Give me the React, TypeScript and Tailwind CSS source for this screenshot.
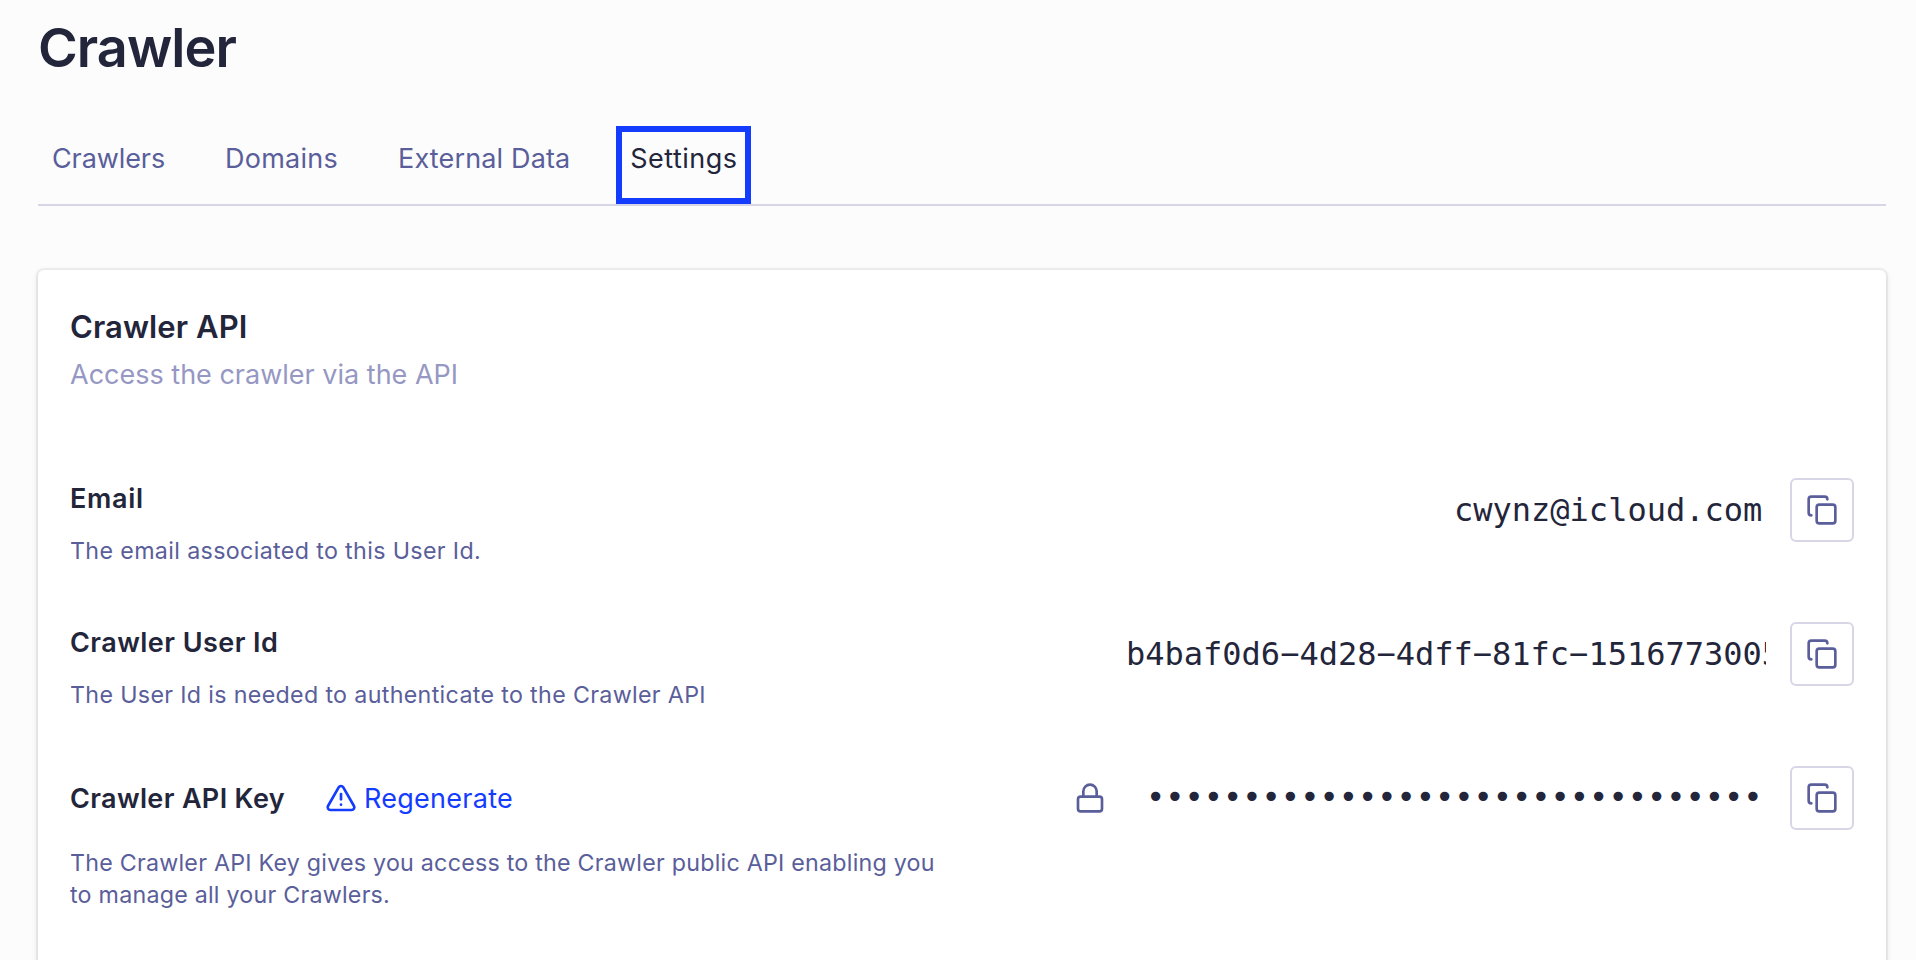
import { Copy, Lock, TriangleAlert } from "lucide-react";
import type { ReactNode } from "react";

const tabs = [
  { label: "Crawlers", style: "ml-[14px] tracking-[-0.1px]" },
  { label: "Domains", style: "ml-[60px] tracking-[0.25px]" },
  { label: "External Data", style: "ml-[60px] tracking-[0.15px]" },
];

function CopyButton() {
  return (
    <button
      type="button"
      aria-label="Copy"
      className="flex size-16 shrink-0 items-center justify-center rounded-[6px] border-2 border-[#d6d6e7] bg-white text-[#5a5e9a]"
    >
      <Copy size={32} strokeWidth={2} />
    </button>
  );
}

function Row({ children, value }: { children: ReactNode; value: ReactNode }) {
  return (
    <div className="flex h-[144px] items-start justify-between">
      <div>{children}</div>
      <div className="flex h-16 items-center gap-6">
        {value}
        <CopyButton />
      </div>
    </div>
  );
}

export default function App() {
  return (
    <div className="h-[960px] overflow-hidden bg-[#fcfcfd] pr-[30px] pl-[38px] font-[Inter,sans-serif] text-[#23263b]">
      <h1 className="pt-[16px] text-[54px] leading-[64px] font-semibold tracking-[-0.95px]">Crawler</h1>

      <nav className="mt-[46px] flex h-[80px] items-start border-b-2 border-[#d6d6e7] text-[27px] leading-[66px] text-[#5a5e9a]">
        {tabs.map((tab) => (
          <a key={tab.label} className={tab.style}>
            {tab.label}
          </a>
        ))}
        <a className="ml-[46px] flex h-[78px] w-[135px] justify-center border-6 border-[#143cff] leading-[54px] tracking-[0.5px] text-[#23263b]">
          Settings
        </a>
      </nav>

      <section className="mt-[64px] h-[760px] rounded-[6px] bg-white px-8 pt-[33px] shadow-[0_0_0_2px_rgba(35,38,59,0.05),0_2px_6px_rgba(35,38,59,0.15)]">
        <h2 className="text-[31px] leading-[48px] font-semibold tracking-[0.1px]">Crawler API</h2>
        <p className="pt-px text-[27px] leading-[46px] text-[#9698c3]">Access the crawler via the API</p>

        <div className="mt-20">
          <Row
            value={
              <span className="w-[312px] overflow-hidden font-['DejaVu_Sans_Mono',monospace] text-[32px] leading-[40px] whitespace-nowrap">
                cwynz@icloud.com
              </span>
            }
          >
            <h3 className="pt-px text-[27px] leading-[40px] font-semibold tracking-[0.7px]">Email</h3>
            <p className="mt-[16px] text-[23.25px] leading-[32px] tracking-[0.35px] text-[#5a5e9a]">
              The email associated to this User Id.
            </p>
          </Row>

          <Row
            value={
              <span className="w-[640px] overflow-hidden font-['DejaVu_Sans_Mono',monospace] text-[32px] leading-[40px] whitespace-nowrap">
                b4baf0d6−4d28−4dff−81fc−1516773005
              </span>
            }
          >
            <h3 className="pt-px text-[27px] leading-[40px] font-semibold tracking-[0.45px]">Crawler User Id</h3>
            <p className="mt-[16px] text-[23.25px] leading-[32px] tracking-[0.33px] text-[#5a5e9a]">
              The User Id is needed to authenticate to the Crawler API
            </p>
          </Row>

          <Row
            value={
              <>
                <Lock size={32} strokeWidth={2} className="mr-4 text-[#5a5e9a]" />
                <span className="w-[620px] overflow-hidden pb-[2px] font-['DejaVu_Sans_Mono',monospace] text-[32px] leading-[40px] whitespace-nowrap">
                  ••••••••••••••••••••••••••••••••
                </span>
              </>
            }
          >
            <div className="flex h-16 items-center">
              <h3 className="pt-px text-[27px] leading-[40px] font-semibold tracking-[0.35px]">Crawler API Key</h3>
              <a className="ml-[40px] flex items-center gap-[7px] text-[27px] leading-[40px] tracking-[0.28px] text-[#143cff]">
                <TriangleAlert size={32} strokeWidth={2} />
                <span className="pt-px">Regenerate</span>
              </a>
            </div>
            <p className="mt-[17px] text-[23.25px] leading-[32px] tracking-[0.23px] text-[#5a5e9a]">
              The Crawler API Key gives you access to the Crawler public API enabling you
              <br />
              to manage all your Crawlers.
            </p>
          </Row>
        </div>
      </section>
    </div>
  );
}
